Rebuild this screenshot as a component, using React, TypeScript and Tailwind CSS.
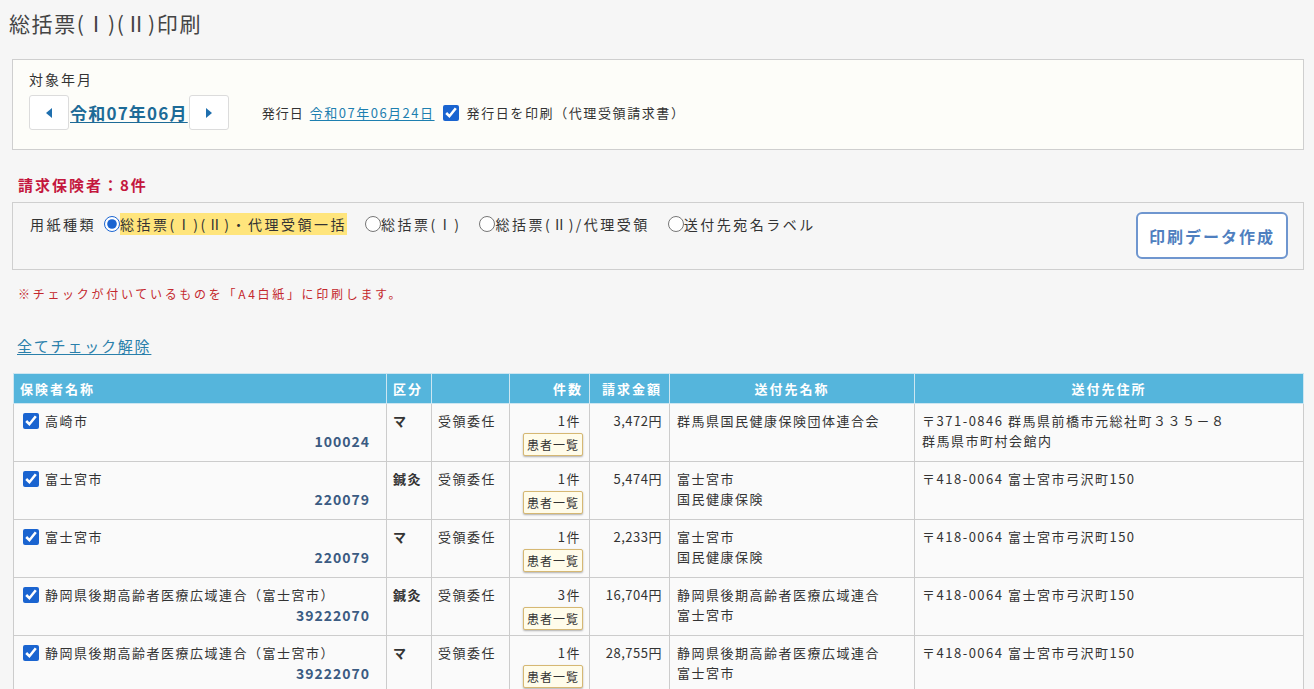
import React, { useState } from "react";

type Row = {
  name: string;
  code: string;
  kind: string;
  type: string;
  count: string;
  amount: string;
  dest: string[];
  addr: string[];
};

const rows: Row[] = [
  {
    name: "高崎市",
    code: "100024",
    kind: "マ",
    type: "受領委任",
    count: "1件",
    amount: "3,472円",
    dest: ["群馬県国民健康保険団体連合会"],
    addr: ["〒371-0846 群馬県前橋市元総社町３３５－８", "群馬県市町村会館内"],
  },
  {
    name: "富士宮市",
    code: "220079",
    kind: "鍼灸",
    type: "受領委任",
    count: "1件",
    amount: "5,474円",
    dest: ["富士宮市", "国民健康保険"],
    addr: ["〒418-0064 富士宮市弓沢町150"],
  },
  {
    name: "富士宮市",
    code: "220079",
    kind: "マ",
    type: "受領委任",
    count: "1件",
    amount: "2,233円",
    dest: ["富士宮市", "国民健康保険"],
    addr: ["〒418-0064 富士宮市弓沢町150"],
  },
  {
    name: "静岡県後期高齢者医療広域連合（富士宮市）",
    code: "39222070",
    kind: "鍼灸",
    type: "受領委任",
    count: "3件",
    amount: "16,704円",
    dest: ["静岡県後期高齢者医療広域連合", "富士宮市"],
    addr: ["〒418-0064 富士宮市弓沢町150"],
  },
  {
    name: "静岡県後期高齢者医療広域連合（富士宮市）",
    code: "39222070",
    kind: "マ",
    type: "受領委任",
    count: "1件",
    amount: "28,755円",
    dest: ["静岡県後期高齢者医療広域連合", "富士宮市"],
    addr: ["〒418-0064 富士宮市弓沢町150"],
  },
];

const paperTypes = [
  "総括票(Ⅰ)(Ⅱ)・代理受領一括",
  "総括票(Ⅰ)",
  "総括票(Ⅱ)/代理受領",
  "送付先宛名ラベル",
];

const Caret = ({ dir }: { dir: "left" | "right" }) => (
  <svg width="8" height="10" viewBox="0 0 8 10">
    {dir === "left" ? (
      <polygon points="7,0 7,10 1,5" fill="#1f6fae" />
    ) : (
      <polygon points="1,0 1,10 7,5" fill="#1f6fae" />
    )}
  </svg>
);

export default function App() {
  const [paper, setPaper] = useState(0);
  const [printDate, setPrintDate] = useState(true);
  const [checked, setChecked] = useState<boolean[]>(rows.map(() => true));

  const toggle = (i: number) =>
    setChecked((prev) => prev.map((v, j) => (j === i ? !v : v)));

  return (
    <div className="min-h-screen bg-[#f6f6f6] pb-10 font-['Noto_Sans_CJK_JP',sans-serif] text-[#333]">
      <h1 className="pl-[9px] pt-[8px] text-[21px] leading-[30px] tracking-[1.6px] text-[#444]">
        総括票(Ⅰ)(Ⅱ)印刷
      </h1>

      <div className="ml-3 mr-[10px]">
        {/* 対象年月 */}
        <div className="mt-[21px] border border-[#cfcfcf] bg-[#fdfdf9] px-4 pb-[19px] pt-[9px]">
          <div className="text-[14px] leading-[20px] tracking-[2px]">対象年月</div>
          <div className="mt-[6px] flex items-center">
            <button className="flex h-[35px] w-[40px] items-center justify-center rounded-[3px] border border-[#dcdcdc] bg-white">
              <Caret dir="left" />
            </button>
            <a className="px-px text-[17px] font-bold tracking-[1.2px] text-[#1d6b97] underline underline-offset-2">
              令和07年06月
            </a>
            <button className="flex h-[35px] w-[40px] items-center justify-center rounded-[3px] border border-[#dcdcdc] bg-white">
              <Caret dir="right" />
            </button>
            <div className="ml-[33px] flex items-center text-[13px] tracking-[1px]">
              <span>発行日</span>
              <a className="ml-[6px] tracking-[1.5px] text-[#1d7fb0] underline underline-offset-2">
                令和07年06月24日
              </a>
              <label className="ml-[8px] flex items-center">
                <input
                  type="checkbox"
                  checked={printDate}
                  onChange={() => setPrintDate(!printDate)}
                  className="h-4 w-4 accent-[#1a64d0]"
                />
                <span className="ml-[8px] tracking-[1.6px]">発行日を印刷（代理受領請求書）</span>
              </label>
            </div>
          </div>
        </div>

        <div className="ml-[6px] mt-[25px] text-[15px] font-bold leading-[20px] tracking-[2px] text-[#c4173d]">
          請求保険者：8件
        </div>

        {/* 用紙種類 */}
        <div className="mt-[7px] flex items-start justify-between border border-[#cfcfcf] bg-[#f6f6f6] pb-[10px] pl-[17px] pr-[15px] pt-[9px]">
          <div className="flex items-center pt-[1px] text-[14px] leading-[22px] tracking-[2.5px]">
            <span className="mr-[8px]">用紙種類</span>
            {paperTypes.map((label, i) => (
              <label key={label} className="mr-[18px] flex items-center">
                <input
                  type="radio"
                  name="paper"
                  checked={paper === i}
                  onChange={() => setPaper(i)}
                  className="m-0 h-4 w-4 accent-[#1a64d0]"
                />
                <span className={paper === i ? "bg-[#ffe57c]" : ""}>{label}</span>
              </label>
            ))}
          </div>
          <button className="h-[47px] w-[152px] rounded-[6px] border-2 border-[#6f96cf] bg-white text-[16px] font-bold tracking-[2px] text-[#4f7fbf]">
            印刷データ作成
          </button>
        </div>

        <div className="ml-[6px] mt-[14px] text-[12px] leading-[20px] tracking-[2.7px] text-[#c4282d]">
          ※チェックが付いているものを「A4白紙」に印刷します。
        </div>

        <a
          className="ml-[5px] mt-[31px] inline-block text-[15px] leading-[22px] tracking-[1.8px] text-[#2a80ab] underline underline-offset-2"
          onClick={() => setChecked(rows.map(() => false))}
        >
          全てチェック解除
        </a>

        <table className="mt-[16px] ml-px w-[1291px] table-fixed border-collapse text-[13px] tracking-[1.5px]">
          <colgroup>
            <col className="w-[373px]" />
            <col className="w-[45px]" />
            <col className="w-[78px]" />
            <col className="w-[80px]" />
            <col className="w-[80px]" />
            <col className="w-[245px]" />
            <col />
          </colgroup>
          <thead>
            <tr className="h-[30px] bg-[#55b5dc] text-[13px] font-bold tracking-[2px] text-white">
              <th className="border border-[#cde6f1] px-[6px] text-left">保険者名称</th>
              <th className="border border-[#cde6f1] px-[6px] text-left">区分</th>
              <th className="border border-[#cde6f1]"></th>
              <th className="border border-[#cde6f1] pr-[6px] text-right">件数</th>
              <th className="border border-[#cde6f1] pr-[7px] text-right">請求金額</th>
              <th className="border border-[#cde6f1] text-center">送付先名称</th>
              <th className="border border-[#cde6f1] text-center">送付先住所</th>
            </tr>
          </thead>
          <tbody>
            {rows.map((r, i) => (
              <tr key={i} className="bg-[#fafafa] align-top leading-[20px]">
                <td className="border border-[#cccccc] pb-[5px] pl-[9px] pr-[16px] pt-[7px]">
                  <label className="flex items-center">
                    <input
                      type="checkbox"
                      checked={checked[i]}
                      onChange={() => toggle(i)}
                      className="h-4 w-4 accent-[#1a64d0]"
                    />
                    <span className="ml-[6px]">{r.name}</span>
                  </label>
                  <div className="text-right text-[14px] font-bold tracking-[1px] text-[#3b5b82]">
                    {r.code}
                  </div>
                </td>
                <td className="border border-[#cccccc] px-[6px] pt-[7px] font-bold">{r.kind}</td>
                <td className="border border-[#cccccc] px-[6px] pt-[7px]">{r.type}</td>
                <td className="border border-[#cccccc] pb-[5px] pr-[6px] pt-[7px] text-right">
                  <div className="pr-[2px]">{r.count}</div>
                  <button className="mt-[2px] h-[23px] rounded-[2px] border border-[#d6b873] bg-[#fffcea] px-[3px] text-[12px] tracking-[1px] shadow-[0_1px_2px_rgba(0,0,0,0.3)]">
                    患者一覧
                  </button>
                </td>
                <td className="border border-[#cccccc] pr-[7px] pt-[7px] text-right tracking-[0.5px]">
                  {r.amount}
                </td>
                <td className="border border-[#cccccc] px-[7px] pt-[7px]">
                  {r.dest.map((d) => (
                    <div key={d}>{d}</div>
                  ))}
                </td>
                <td className="border border-[#cccccc] px-[7px] pt-[7px]">
                  {r.addr.map((a) => (
                    <div key={a}>{a}</div>
                  ))}
                </td>
              </tr>
            ))}
          </tbody>
        </table>
      </div>
    </div>
  );
}
